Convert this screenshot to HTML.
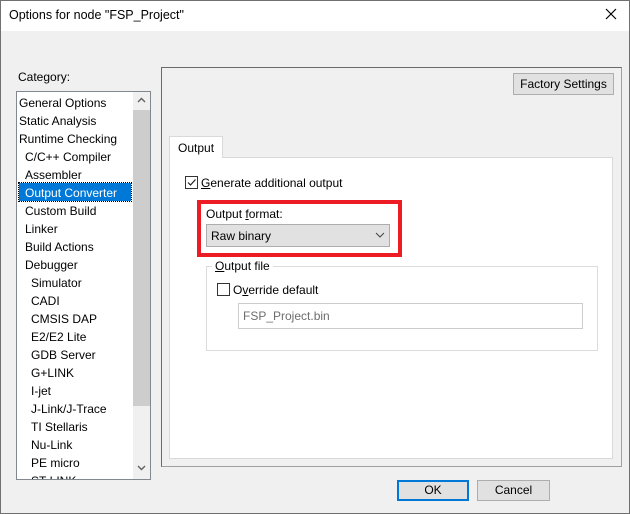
<!DOCTYPE html>
<html><head><style>
*{margin:0;padding:0;box-sizing:border-box}
body{width:630px;height:514px;background:#f0f0f0;font-family:"Liberation Sans",sans-serif;font-size:12px;color:#000;position:relative;overflow:hidden}
.a{position:absolute}
.win{left:0;top:0;width:630px;height:514px;border:1px solid #707070}
.title{left:1px;top:1px;width:628px;height:30px;background:#fff}
.btn{background:#e1e1e1;border:1px solid #adadad;text-align:center;line-height:19px}
u{text-decoration:underline}
</style></head><body>
<div class="a win"></div>
<div class="a title"></div>
<div class="a" style="left:9px;top:8px;font-size:12.5px">Options for node "FSP_Project"</div>
<svg class="a" style="left:605px;top:8px" width="12" height="12"><path d="M1 1L11 11M11 1L1 11" stroke="#000" stroke-width="1.2"/></svg>
<div class="a" style="left:18px;top:70px">Category:</div>
<div class="a" style="left:16px;top:91px;width:135px;height:389px;background:#fff;border:1px solid #828790;overflow:hidden">
<div class="a" style="left:116px;top:0;width:17px;height:387px;background:#f0f0f0"></div>
<div class="a" style="left:116px;top:18px;width:17px;height:296px;background:#cdcdcd"></div>
<svg class="a" style="left:120px;top:5px" width="9" height="6"><path d="M1 5L4.5 1.5L8 5" stroke="#606060" fill="none" stroke-width="1.4"/></svg>
<svg class="a" style="left:120px;top:373px" width="9" height="6"><path d="M1 1L4.5 4.5L8 1" stroke="#606060" fill="none" stroke-width="1.4"/></svg>
<div class="a" style="left:2px;top:91px;width:112px;height:18px;background:#0078d7;outline:1px dotted #000"></div>
<div class="a" style="left:2px;top:2px;line-height:18px;width:114px;white-space:nowrap">
<div>General Options</div><div>Static Analysis</div><div>Runtime Checking</div>
<div style="padding-left:6px">C/C++ Compiler</div><div style="padding-left:6px">Assembler</div>
<div style="padding-left:6px;color:#fff">Output Converter</div><div style="padding-left:6px">Custom Build</div>
<div style="padding-left:6px">Linker</div><div style="padding-left:6px">Build Actions</div><div style="padding-left:6px">Debugger</div>
<div style="padding-left:12px">Simulator</div><div style="padding-left:12px">CADI</div><div style="padding-left:12px">CMSIS DAP</div>
<div style="padding-left:12px">E2/E2 Lite</div><div style="padding-left:12px">GDB Server</div><div style="padding-left:12px">G+LINK</div>
<div style="padding-left:12px">I-jet</div><div style="padding-left:12px">J-Link/J-Trace</div><div style="padding-left:12px">TI Stellaris</div>
<div style="padding-left:12px">Nu-Link</div><div style="padding-left:12px">PE micro</div><div style="padding-left:12px">ST-LINK</div>
</div></div>
<div class="a" style="left:161px;top:67px;width:461px;height:400px;border:1px solid #6a6a6a;border-right-color:#a0a0a0;border-bottom-color:#a0a0a0"></div>
<div class="a btn" style="left:513px;top:73px;width:101px;height:22px;line-height:21px">Factory Settings</div>
<div class="a" style="left:169px;top:157px;width:444px;height:302px;background:#fff;border:1px solid #d9d9d9"></div>
<div class="a" style="left:169px;top:136px;width:54px;height:22px;background:#fff;border:1px solid #d9d9d9;border-bottom:none;padding:4px 0 0 8px">Output</div>
<div class="a" style="left:185px;top:176px;width:13px;height:13px;border:1px solid #333;background:#fff"></div>
<svg class="a" style="left:186px;top:177px" width="11" height="11"><path d="M2 5.5L4.5 8L9.5 2.5" stroke="#222" fill="none" stroke-width="1.2"/></svg>
<div class="a" style="left:201px;top:176px"><u>G</u>enerate additional output</div>
<div class="a" style="left:197px;top:200px;width:205px;height:57px;border:4px solid #ed1c24"></div>
<div class="a" style="left:206px;top:207px">Output <u>f</u>ormat:</div>
<div class="a" style="left:206px;top:224px;width:184px;height:23px;background:#e1e1e1;border:1px solid #adadad;padding:4px 0 0 4px">Raw binary</div>
<svg class="a" style="left:375px;top:232px" width="10" height="6"><path d="M1 1L5 5L9 1" stroke="#444" fill="none"/></svg>
<div class="a" style="left:206px;top:266px;width:392px;height:85px;border:1px solid #dcdcdc"></div>
<div class="a" style="left:212px;top:259px;background:#fff;padding:0 3px"><u>O</u>utput file</div>
<div class="a" style="left:217px;top:283px;width:13px;height:13px;border:1px solid #333;background:#fff"></div>
<div class="a" style="left:233px;top:283px">O<u>v</u>erride default</div>
<div class="a" style="left:238px;top:303px;width:345px;height:26px;border:1px solid #ccc;padding:5px 0 0 4px;color:#6d6d6d">FSP_Project.bin</div>
<div class="a btn" style="left:397px;top:480px;width:72px;height:21px;border:2px solid #0078d7;line-height:17px">OK</div>
<div class="a btn" style="left:477px;top:480px;width:73px;height:21px">Cancel</div>
</body></html>
